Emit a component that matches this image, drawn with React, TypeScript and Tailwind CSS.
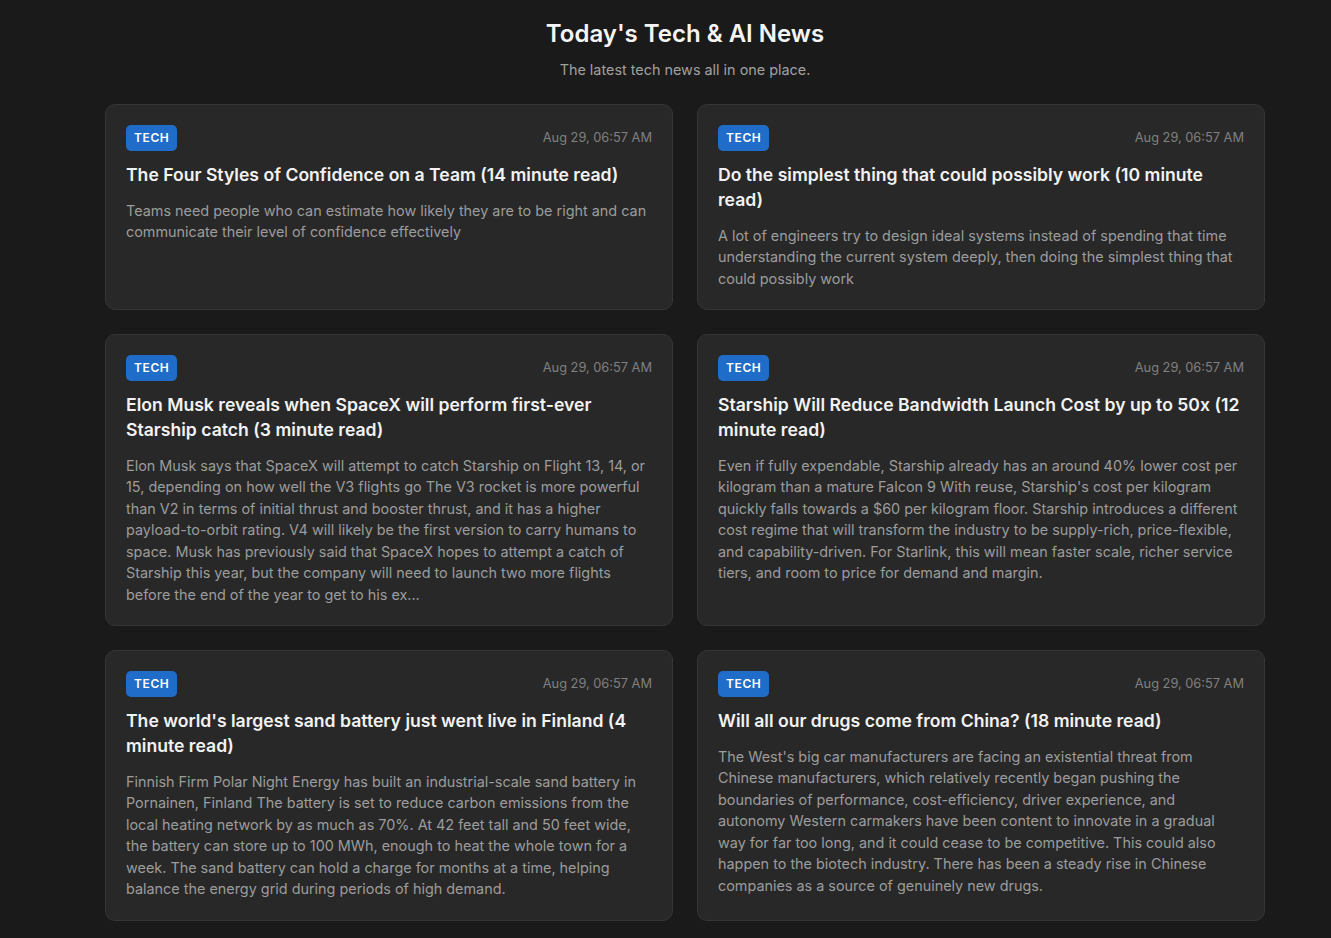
import React from "react";

type Item = { title: string; desc: string };

const items: Item[] = [
  {
    title: "The Four Styles of Confidence on a Team (14 minute read)",
    desc: "Teams need people who can estimate how likely they are to be right and can communicate their level of confidence effectively",
  },
  {
    title: "Do the simplest thing that could possibly work (10 minute read)",
    desc: "A lot of engineers try to design ideal systems instead of spending that time understanding the current system deeply, then doing the simplest thing that could possibly work",
  },
  {
    title: "Elon Musk reveals when SpaceX will perform first-ever Starship catch (3 minute read)",
    desc: "Elon Musk says that SpaceX will attempt to catch Starship on Flight 13, 14, or 15, depending on how well the V3 flights go The V3 rocket is more powerful than V2 in terms of initial thrust and booster thrust, and it has a higher payload-to-orbit rating. V4 will likely be the first version to carry humans to space. Musk has previously said that SpaceX hopes to attempt a catch of Starship this year, but the company will need to launch two more flights before the end of the year to get to his ex...",
  },
  {
    title: "Starship Will Reduce Bandwidth Launch Cost by up to 50x (12 minute read)",
    desc: "Even if fully expendable, Starship already has an around 40% lower cost per kilogram than a mature Falcon 9 With reuse, Starship's cost per kilogram quickly falls towards a $60 per kilogram floor. Starship introduces a different cost regime that will transform the industry to be supply-rich, price-flexible, and capability-driven. For Starlink, this will mean faster scale, richer service tiers, and room to price for demand and margin.",
  },
  {
    title: "The world's largest sand battery just went live in Finland (4 minute read)",
    desc: "Finnish Firm Polar Night Energy has built an industrial-scale sand battery in Pornainen, Finland The battery is set to reduce carbon emissions from the local heating network by as much as 70%. At 42 feet tall and 50 feet wide, the battery can store up to 100 MWh, enough to heat the whole town for a week. The sand battery can hold a charge for months at a time, helping balance the energy grid during periods of high demand.",
  },
  {
    title: "Will all our drugs come from China? (18 minute read)",
    desc: "The West's big car manufacturers are facing an existential threat from Chinese manufacturers, which relatively recently began pushing the boundaries of performance, cost-efficiency, driver experience, and autonomy Western carmakers have been content to innovate in a gradual way for far too long, and it could cease to be competitive. This could also happen to the biotech industry. There has been a steady rise in Chinese companies as a source of genuinely new drugs.",
  },
];

function Card({ item }: { item: Item }) {
  return (
    <div className="flex flex-col rounded-[10px] border border-[#353535] bg-[#282828] px-5 pt-5 pb-5">
      <div className="flex h-[26px] items-center justify-between">
        <span className="rounded-[5px] bg-[#1f6dc8] px-2 py-[4px] text-[12px] leading-[18px] font-semibold tracking-[0.05em] text-white">
          TECH
        </span>
        <span className="text-[12.8px] text-[#808080]">Aug 29, 06:57 AM</span>
      </div>
      <h2 className="mt-[10.5px] text-[17.6px] leading-[25px] font-semibold text-[#f2f2f2]">
        {item.title}
      </h2>
      <p className="mt-[13px] text-[14.4px] leading-[21.5px] text-[#9c9c9c]">{item.desc}</p>
    </div>
  );
}

export default function App() {
  return (
    <div
      className="min-h-screen bg-[#1a1a1a] pl-[39px] pb-6"
      style={{ fontFamily: "Inter, 'Noto Sans', sans-serif" }}
    >
      <div className="mx-auto max-w-[1160px] pt-[18px]">
        <h1 className="text-center text-[24px] leading-[32px] font-semibold text-[#f5f5f5]">
          Today's Tech &amp; AI News
        </h1>
        <p className="mt-[9px] text-center text-[14.4px] leading-[21px] text-[#a0a0a0]">
          The latest tech news all in one place.
        </p>
        <div className="mt-[24px] grid grid-cols-2 gap-x-[24px] gap-y-[24px]">
          {items.map((it, i) => (
            <Card key={i} item={it} />
          ))}
        </div>
      </div>
    </div>
  );
}
